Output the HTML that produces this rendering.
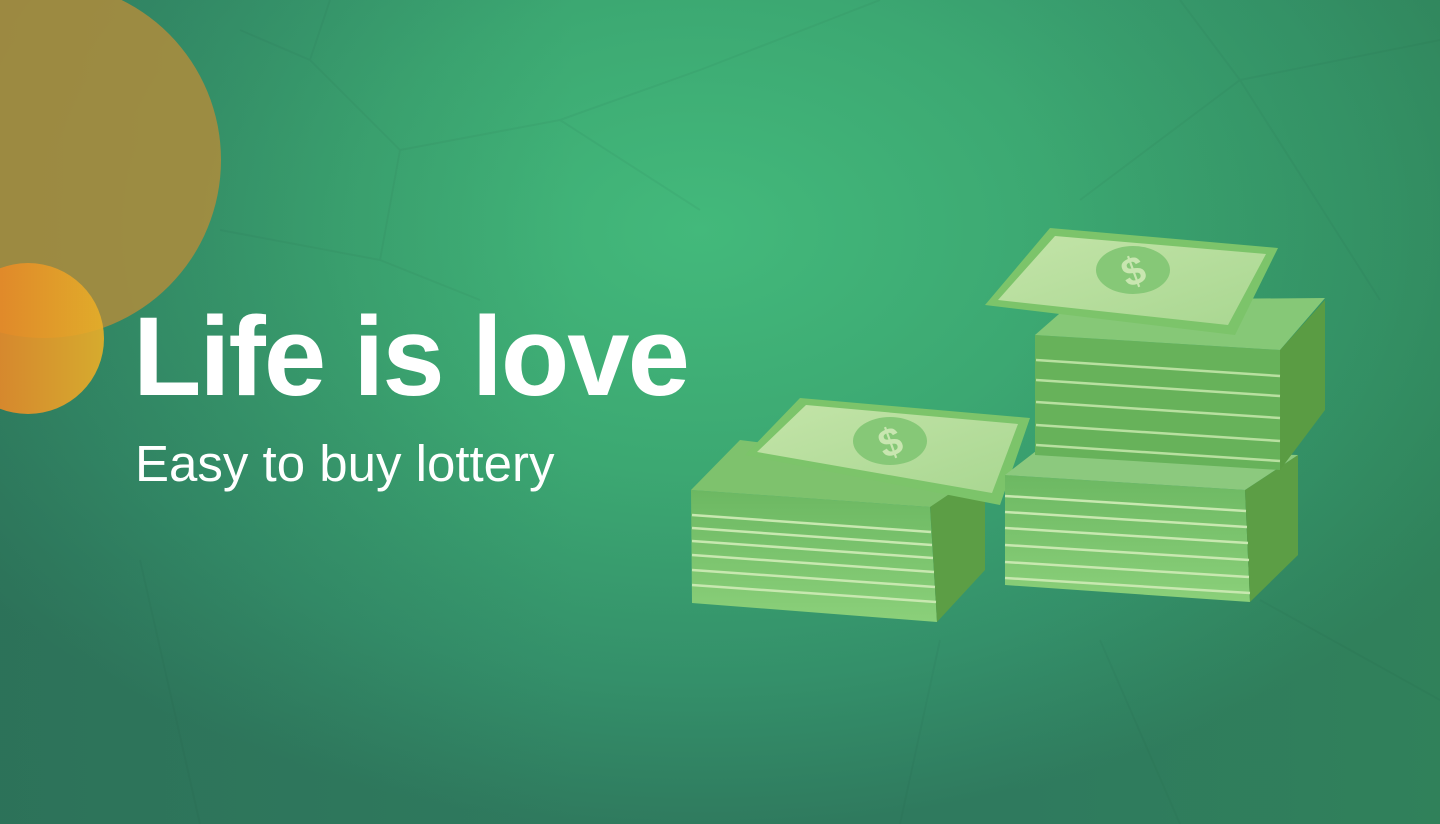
<!DOCTYPE html>
<html><head><meta charset="utf-8"><style>
html,body{margin:0;padding:0}
body{width:1440px;height:824px;overflow:hidden;position:relative;
background:radial-gradient(ellipse 900px 600px at 700px 230px,#43b97b 0%,#3ca872 40%,#34906a 75%,#2f7a5e 100%);
font-family:"Liberation Sans",sans-serif}
.r{position:absolute;inset:0;background:linear-gradient(90deg,rgba(40,100,80,.35) 0%,rgba(0,0,0,0) 40%,rgba(0,0,0,0) 70%,rgba(50,150,80,.25) 100%)}
.c1{position:absolute;left:-133px;top:-18px;width:354px;height:356px;border-radius:50%;background:rgba(175,140,60,.85)}
.c2{position:absolute;left:-48px;top:263px;width:152px;height:151px;border-radius:50%;background:linear-gradient(90deg,rgba(232,120,40,.9),rgba(232,175,40,.9))}
h1{position:absolute;left:133px;top:292px;margin:0;font-size:112px;font-weight:bold;color:#fff;letter-spacing:-2px;white-space:nowrap}
h2{position:absolute;left:135px;top:434px;margin:0;font-size:51px;font-weight:normal;color:#fff;white-space:nowrap}
svg{position:absolute;left:0;top:0}
</style></head><body>
<div class="r"></div>
<svg width="1440" height="824" style="opacity:.06">
<g fill="none" stroke="#1d4d3a" stroke-width="2">
<path d="M330 0 L310 60 L240 30 M310 60 L400 150 L560 120 L700 70 L880 0 M400 150 L380 260 L480 300 M220 230 L380 260 M560 120 L700 210 M1180 0 L1240 80 L1440 40 M1240 80 L1380 300 M1240 80 L1080 200 M140 560 L200 824 M940 640 L900 824 M1100 640 L1180 824 M1260 600 L1440 700"/>
</g></svg>
<div class="c1"></div>
<div class="c2"></div>
<h1>Life is love</h1>
<h2>Easy to buy lottery</h2>
<svg width="1440" height="824">
<defs>
<linearGradient id="f" x1="0" y1="0" x2="0" y2="1"><stop offset="0" stop-color="#6cb862"/><stop offset="1" stop-color="#8bd07a"/></linearGradient>
<linearGradient id="t" x1="0" y1="0" x2="1" y2="1"><stop offset="0" stop-color="#c3e4a8"/><stop offset="1" stop-color="#a9d791"/></linearGradient>
</defs>
<polygon points="691,490 930,507 937,622 692,603" fill="url(#f)"/>
<polygon points="930,505 985,470 985,570 937,622" fill="#5c9e45"/>
<polygon points="691,490 740,440 985,470 930,507" fill="#7ec26d"/>
<g stroke="#c8e8b0" stroke-width="2.5">
<line x1="692" y1="515" x2="931" y2="532"/><line x1="692" y1="528" x2="932" y2="545"/><line x1="692" y1="541" x2="933" y2="558"/><line x1="692" y1="555" x2="934" y2="572"/><line x1="692" y1="570" x2="935" y2="587"/><line x1="692" y1="585" x2="936" y2="602"/></g>
<polygon points="745,455 800,398 1030,418 1000,505" fill="#7cc46a"/>
<polygon points="757,452 806,405 1018,424 992,493" fill="url(#t)"/>
<ellipse cx="890" cy="441" rx="37" ry="24" fill="#86c877"/>
<text x="890" y="456" text-anchor="middle" font-size="40" font-weight="bold" fill="#c8e6b0" transform="rotate(-20 890 441)">$</text>
<polygon points="1005,475 1245,490 1250,602 1005,585" fill="url(#f)"/>
<polygon points="1245,490 1298,455 1298,555 1250,602" fill="#5c9e45"/>
<polygon points="1005,475 1040,448 1298,455 1245,490" fill="#8cc97e"/>
<g stroke="#c8e8b0" stroke-width="2.5">
<line x1="1005" y1="496" x2="1246" y2="511"/><line x1="1005" y1="512" x2="1247" y2="527"/><line x1="1005" y1="528" x2="1248" y2="543"/><line x1="1005" y1="545" x2="1249" y2="560"/><line x1="1005" y1="562" x2="1249" y2="577"/><line x1="1005" y1="578" x2="1250" y2="593"/></g>
<polygon points="1035,335 1280,350 1280,470 1035,455" fill="#67b25a"/>
<polygon points="1280,350 1325,300 1325,410 1280,470" fill="#5a9c43"/>
<polygon points="1035,335 1075,300 1325,298 1280,350" fill="#86c877"/>
<g stroke="#b8e0a0" stroke-width="2.5">
<line x1="1036" y1="360" x2="1280" y2="376"/><line x1="1036" y1="380" x2="1280" y2="396"/><line x1="1036" y1="402" x2="1280" y2="418"/><line x1="1036" y1="425" x2="1280" y2="441"/><line x1="1036" y1="445" x2="1280" y2="461"/></g>
<polygon points="985,305 1050,228 1278,248 1235,335" fill="#7cc46a"/>
<polygon points="998,300 1055,236 1266,254 1228,325" fill="url(#t)"/>
<ellipse cx="1133" cy="270" rx="37" ry="24" fill="#86c877"/>
<text x="1133" y="285" text-anchor="middle" font-size="40" font-weight="bold" fill="#c8e6b0" transform="rotate(-20 1133 270)">$</text>
</svg>
</body></html>
